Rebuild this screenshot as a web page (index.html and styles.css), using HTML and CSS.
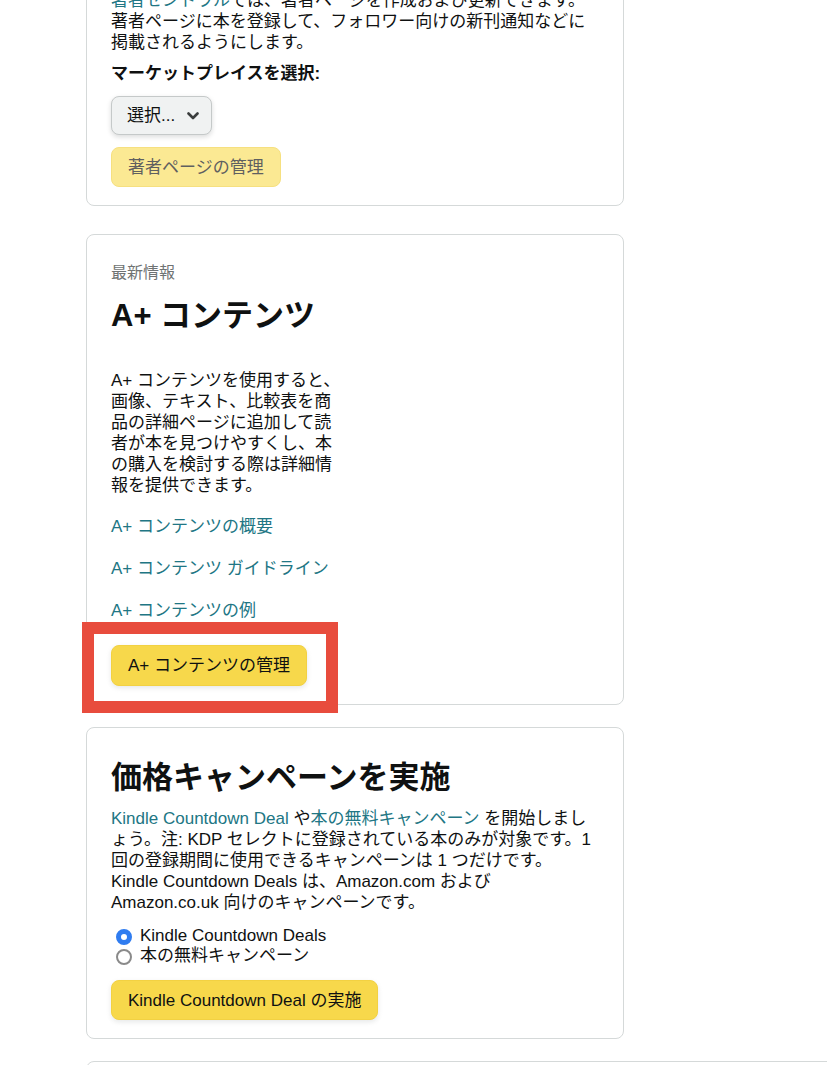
FILE: index.html
```html
<!DOCTYPE html>
<html lang="ja">
<head>
    <meta charset="UTF-8">
    <meta name="viewport" content="width=device-width, initial-scale=1.0">
    <title>KDP - マーケティング</title>
    <link rel="stylesheet" href="styles.css">
</head>
<body>
    <main class="page">
        <section class="card card-author">
            <p class="text"><a href="#" class="link">著者セントラル</a>では、著者ページを作成および更新できます。著者ページに本を登録して、フォロワー向けの新刊通知などに掲載されるようにします。</p>
            <p class="label">マーケットプレイスを選択:</p>
            <button class="select">
                <span>選択...</span>
                <svg width="12" height="8" viewBox="0 0 12 8"><path d="M1.5 1.5l4.5 4.5 4.5-4.5" fill="none" stroke="#3a3d3d" stroke-width="2.6" stroke-linecap="round" stroke-linejoin="round"/></svg>
            </button>
            <button class="btn btn-disabled">著者ページの管理</button>
        </section>

        <section class="card card-aplus">
            <p class="eyebrow">最新情報</p>
            <h2 class="title">A+ コンテンツ</h2>
            <p class="text narrow">A+ コンテンツを使用すると、画像、テキスト、比較表を商品の詳細ページに追加して読者が本を見つけやすくし、本の購入を検討する際は詳細情報を提供できます。</p>
            <ul class="links">
                <li><a href="#" class="link">A+ コンテンツの概要</a></li>
                <li><a href="#" class="link">A+ コンテンツ ガイドライン</a></li>
                <li><a href="#" class="link">A+ コンテンツの例</a></li>
            </ul>
            <button class="btn btn-aplus">A+ コンテンツの管理</button>
            <div class="highlight"></div>
        </section>

        <section class="card card-deal">
            <h2 class="title title-deal">価格キャンペーンを実施</h2>
            <p class="text deal-text"><a href="#" class="link">Kindle Countdown Deal</a> や<a href="#" class="link">本の無料キャンペーン</a> を開始しましょう。注: KDP セレクトに登録されている本のみが対象です。1 回の登録期間に使用できるキャンペーンは 1 つだけです。<br>Kindle Countdown Deals は、Amazon.com および Amazon.co.uk 向けのキャンペーンです。</p>
            <div class="radios">
                <label class="radio"><input type="radio" name="deal" checked> Kindle Countdown Deals</label>
                <label class="radio"><input type="radio" name="deal"> 本の無料キャンペーン</label>
            </div>
            <button class="btn btn-deal">Kindle Countdown Deal の実施</button>
        </section>

        <section class="card card-next"></section>
    </main>
</body>
</html>
```

FILE: styles.css
```css
/* Base */
* {
    margin: 0;
    padding: 0;
    box-sizing: border-box;
}
body {
    font-family: 'Liberation Sans', 'Noto Sans CJK JP', sans-serif;
    font-size: 17px;
    line-height: 21px;
    color: #0f1111;
    background: #fff;
    overflow: hidden;
}
.page {
    margin: -38px 0 0 86px;
}

/* Cards */
.card {
    position: relative;
    width: 538px;
    border: 1px solid #d5d9d9;
    border-radius: 8px;
    padding: 27px 24px 18px;
    margin-bottom: 22px;
}
.card-author {
    margin-bottom: 28px;
}
.card-next {
    width: 900px;
    height: 200px;
}

.text {
    font-size: 17px;
    line-height: 21px;
}
.narrow {
    width: 236px;
    margin-top: 34px;
}
.deal-text {
    margin-top: 10px;
}
.link {
    color: #217684;
    text-decoration: none;
}
.label {
    font-weight: bold;
    margin-top: 10px;
}
.eyebrow {
    font-size: 16px;
    color: #6f7373;
}
.title {
    font-size: 31px;
    line-height: 40px;
    font-weight: bold;
    margin-top: 13px;
}
.title-deal {
    margin-top: 3px;
}

.links {
    list-style: none;
    margin-top: 20px;
}
.links li + li {
    margin-top: 21px;
}

/* Controls */
.select {
    display: flex;
    align-items: center;
    gap: 12px;
    margin-top: 12px;
    height: 39px;
    padding: 0 12px 0 15px;
    font: inherit;
    color: #0f1111;
    background: #f0f2f2;
    border: 1px solid #c5c9c9;
    border-radius: 8px;
    box-shadow: 0 2px 5px rgba(15, 17, 17, 0.15);
}
.btn {
    display: block;
    height: 41px;
    padding: 0 16px;
    font: inherit;
    color: #0f1111;
    background: #f7d84b;
    border: 1px solid #f2d142;
    border-radius: 8px;
    box-shadow: 0 2px 5px rgba(213, 217, 217, 0.6);
}
.btn-disabled {
    height: 40px;
    margin-top: 12px;
    background: #fbe993;
    border-color: #f6e080;
    color: #5f6060;
    box-shadow: none;
}
.btn-aplus {
    margin-top: 24px;
}
.btn-deal {
    height: 40px;
    margin-top: 15px;
}

.radios {
    margin-top: 13px;
}
.radio {
    display: flex;
    align-items: center;
    height: 19.5px;
    line-height: 19px;
}
.radio input {
    appearance: none;
    width: 16px;
    height: 16px;
    margin: 3px 8px 0 5px;
    border: 2px solid #8a8a8a;
    border-radius: 50%;
    background: #fff;
}
.radio input:checked {
    border: 5px solid #2f7cf0;
}

/* Annotation */
.highlight {
    position: absolute;
    left: -5px;
    top: 387px;
    width: 256px;
    height: 91px;
    border: 12px solid #e84c3d;
}
```
